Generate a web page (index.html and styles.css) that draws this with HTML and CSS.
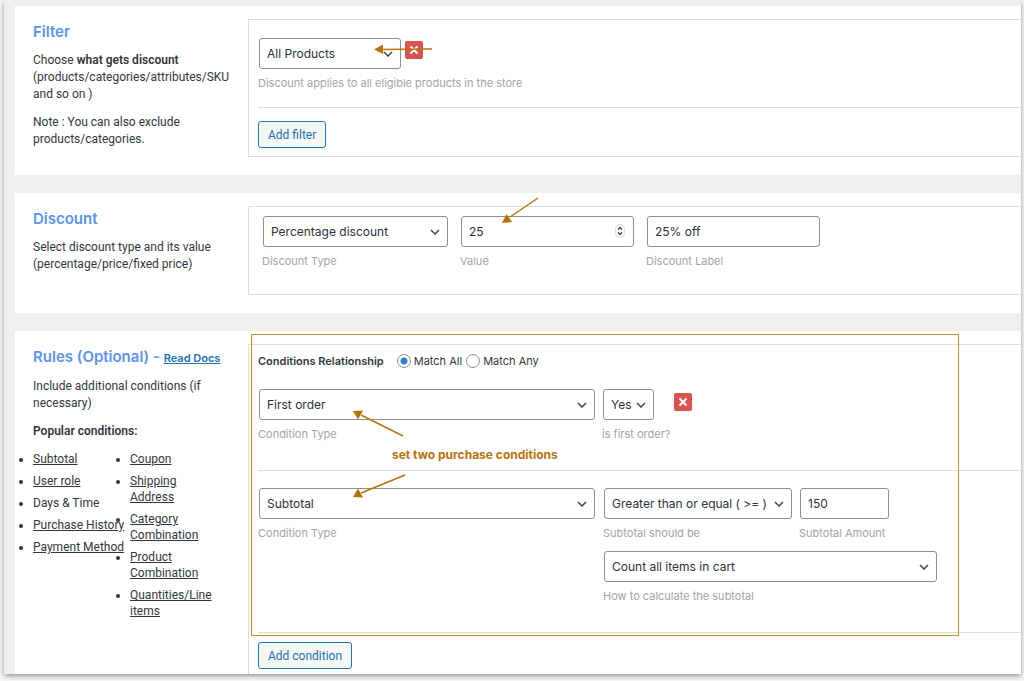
FILE: index.html
```html
<!DOCTYPE html>
<html lang="en">
<head>
    <meta charset="UTF-8">
    <meta name="viewport" content="width=device-width, initial-scale=1.0">
    <title>Discount rule</title>
    <link rel="stylesheet" href="styles.css">
</head>
<body>

<main class="rule-page">

    <!-- Filter -->
    <section class="panel">
        <div class="panel-info">
            <h2>Filter</h2>
            <p>Choose <b>what gets discount</b> (products/categories/attributes/SKU and so on )</p>
            <p>Note : You can also exclude products/categories.</p>
        </div>
        <div class="panel-body">
            <div class="filter-row">
                <div class="field field-filter">
                    <select id="filterType" aria-label="Filter type" aria-describedby="filterHelp">
                        <option>All Products</option>
                    </select>
                    <span class="help" id="filterHelp">Discount applies to all eligible products in the store</span>
                </div>
                <button type="button" class="remove" aria-label="Remove filter">
                    <svg viewBox="0 0 18 18"><path d="M5.5 5.5l7 7M12.5 5.5l-7 7"/></svg>
                </button>
            </div>
            <div class="actions">
                <button type="button" class="add">Add filter</button>
            </div>
            <svg class="arrow arrow-filter" viewBox="0 0 60 12">
                <path class="line" d="M8 6.5L58 6"/>
                <path class="head" d="M0 6.5L9 1.5V11z"/>
            </svg>
        </div>
    </section>

    <!-- Discount -->
    <section class="panel">
        <div class="panel-info">
            <h2>Discount</h2>
            <p>Select discount type and its value (percentage/price/fixed price)</p>
        </div>
        <div class="panel-body discount-row">
            <div class="field field-type">
                <select id="discountType">
                    <option>Percentage discount</option>
                </select>
                <label class="help" for="discountType">Discount Type</label>
            </div>
            <div class="field field-value">
                <div class="number">
                    <input type="number" id="discountValue" value="25">
                    <svg class="spinner" viewBox="0 0 10 14">
                        <rect x=".5" y=".5" width="9" height="13" rx="4"/>
                        <path d="M3 5.5l2-2 2 2M3 8.5l2 2 2-2"/>
                    </svg>
                </div>
                <label class="help" for="discountValue">Value</label>
            </div>
            <div class="field field-value">
                <input type="text" id="discountLabel" value="25% off">
                <label class="help" for="discountLabel">Discount Label</label>
            </div>
            <svg class="arrow arrow-value" viewBox="0 0 38 28">
                <path class="line" d="M36 2L8 21"/>
                <path class="head" d="M0 27L4.5 18L10 26z"/>
            </svg>
        </div>
    </section>

    <!-- Rules -->
    <section class="panel">
        <div class="panel-info">
            <h2>Rules (Optional) - <a href="#">Read Docs</a></h2>
            <p>Include additional conditions (if necessary)</p>
            <p><b>Popular conditions:</b></p>
            <div class="popular">
                <ul>
                    <li><a href="#">Subtotal</a></li>
                    <li><a href="#">User role</a></li>
                    <li>Days &amp; Time</li>
                    <li><a href="#">Purchase History</a></li>
                    <li><a href="#">Payment Method</a></li>
                </ul>
                <ul>
                    <li><a href="#">Coupon</a></li>
                    <li><a href="#">Shipping Address</a></li>
                    <li><a href="#">Category Combination</a></li>
                    <li><a href="#">Product Combination</a></li>
                    <li><a href="#">Quantities/Line items</a></li>
                </ul>
            </div>
        </div>
        <div class="panel-body">
            <div class="relationship" role="radiogroup" aria-labelledby="relationship">
                <b id="relationship">Conditions Relationship</b>
                <label><input type="radio" name="match" checked>Match All</label>
                <label><input type="radio" name="match">Match Any</label>
            </div>

            <div class="condition">
                <div class="field field-condition">
                    <select id="condition1">
                        <option>First order</option>
                    </select>
                    <label class="help" for="condition1">Condition Type</label>
                </div>
                <div class="field field-yes">
                    <select id="isFirst">
                        <option>Yes</option>
                    </select>
                    <label class="help" for="isFirst">is first order?</label>
                </div>
                <button type="button" class="remove" aria-label="Remove condition">
                    <svg viewBox="0 0 18 18"><path d="M5.5 5.5l7 7M12.5 5.5l-7 7"/></svg>
                </button>
            </div>

            <div class="condition">
                <div class="field field-condition">
                    <select id="condition2">
                        <option>Subtotal</option>
                    </select>
                    <label class="help" for="condition2">Condition Type</label>
                </div>
                <div class="condition-options">
                    <div class="field field-operator">
                        <select id="operator">
                            <option>Greater than or equal ( &gt;= )</option>
                        </select>
                        <label class="help" for="operator">Subtotal should be</label>
                    </div>
                    <div class="field field-amount">
                        <input type="text" id="amount" value="150">
                        <label class="help" for="amount">Subtotal Amount</label>
                    </div>
                    <div class="field field-count">
                        <select id="countBy">
                            <option>Count all items in cart</option>
                        </select>
                        <label class="help" for="countBy">How to calculate the subtotal</label>
                    </div>
                </div>
            </div>

            <div class="actions">
                <button type="button" class="add">Add condition</button>
            </div>

            <!-- callout over the two conditions -->
            <div class="callout">
                <svg class="arrow arrow-first" viewBox="0 0 52 28">
                    <path class="line" d="M50 26L8 5"/>
                    <path class="head" d="M0 1L10 .5L5 9.5z"/>
                </svg>
                <span class="callout-text">set two purchase conditions</span>
                <svg class="arrow arrow-second" viewBox="0 0 54 26">
                    <path class="line" d="M52 2L8 20"/>
                    <path class="head" d="M0 24L5 15.5L10 24.5z"/>
                </svg>
            </div>
        </div>
    </section>

</main>

</body>
</html>
```

FILE: styles.css
```css
:root {
    --heading: #5b93ef;
    --link: #2271b1;
    --text: #32373c;
    --muted: #a3a3a3;
    --line: #dcdfe0;
    --field-border: #8c8f94;
    --mark: #b8720a;
}

* {
    box-sizing: border-box;
}

body {
    margin: 0;
    background: #f7f7f7;
    color: var(--text);
    font-family: Inter, "Liberation Sans", sans-serif;
    font-size: 12px;
    line-height: 17px;
}

.rule-page {
    margin: 0 3px 7px 4px;
    padding: 6px 0 0 11px;
    background: #efefef;
    box-shadow: 0 2px 5px rgba(0, 0, 0, 0.4);
    display: flex;
    flex-direction: column;
    gap: 18px;
}

.panel {
    background: white;
    display: flex;
    padding: 13px 0 18px;
}

.panel:last-child {
    padding-bottom: 0;
}

.panel-info {
    width: 233px;
    flex-shrink: 0;
    padding: 2px 16px 0 18px;
}

.panel-info h2 {
    margin: 0 0 9px;
    color: var(--heading);
    font-size: 15px;
    font-weight: 600;
    line-height: 22px;
    white-space: nowrap;
}

.panel-info h2 a {
    color: var(--link);
    font-size: 11px;
}

.panel-info p,
.popular {
    font-family: Roboto, "Liberation Sans", sans-serif;
}

.panel-info p {
    margin: 0 0 11px;
}

.panel-info p:last-child {
    margin-bottom: 0;
}

b {
    font-weight: 600;
}

.popular {
    display: flex;
}

.popular ul {
    width: 97px;
    margin: 0;
    padding: 0;
    line-height: 16px;
}

.popular ul:first-child {
    white-space: nowrap;
}

.popular ul:last-child {
    width: 86px;
}

.popular li {
    margin-bottom: 6px;
}

.popular a {
    color: inherit;
}

.panel-body {
    position: relative;
    flex: 1;
    min-width: 0;
    border: 1px solid var(--line);
    border-right: 0;
    padding-left: 9px;
}

.panel:last-child .panel-body {
    border-bottom: 0;
}

.field {
    display: flex;
    flex-direction: column;
    gap: 6px;
}

.help {
    margin-left: -1px;
    color: var(--muted);
    font-size: 11px;
    line-height: 16px;
    white-space: nowrap;
}

select,
input[type="text"],
input[type="number"] {
    width: 100%;
    height: 31px;
    margin: 0;
    padding: 0 7px;
    border: 1px solid var(--field-border);
    border-radius: 3px;
    background: white;
    color: #2c3338;
    font: inherit;
    appearance: none;
}

select {
    padding-right: 18px;
    background: white url("data:image/svg+xml,%3Csvg xmlns='http://www.w3.org/2000/svg' viewBox='0 0 10 6'%3E%3Cpath d='M1 1l4 4 4-4' fill='none' stroke='%23444' stroke-width='1.5'/%3E%3C/svg%3E") no-repeat right 7px center / 10px 6px;
}

input[type="number"] {
    appearance: textfield;
}

.number {
    position: relative;
}

.spinner {
    position: absolute;
    top: 8px;
    right: 9px;
    width: 10px;
    height: 14px;
    fill: #fafafa;
    stroke: #ddd;
}

.spinner path {
    fill: none;
    stroke: #333;
    stroke-width: 1.2;
}

.remove {
    width: 18px;
    height: 18px;
    padding: 0;
    border: 0;
    border-radius: 2px;
    background: #d9534f;
    cursor: pointer;
}

.remove svg {
    display: block;
    fill: none;
    stroke: white;
    stroke-width: 2;
}

.add {
    height: 27px;
    padding: 0 9px;
    border: 1px solid var(--link);
    border-radius: 3px;
    background: #f6f7f7;
    color: var(--link);
    font: 12px Roboto, "Liberation Sans", sans-serif;
    cursor: pointer;
}

/* filter */
.filter-row {
    display: flex;
    gap: 4px;
    height: 88px;
    padding: 18px 0 0 1px;
    border-bottom: 1px solid var(--line);
}

.filter-row .remove {
    margin-top: 3px;
}

.field-filter {
    width: 142px;
}

.actions {
    display: flex;
    padding: 13px 0 8px;
}

.condition + .actions {
    padding: 9px 0 5px;
}

/* discount */
.discount-row {
    display: flex;
    gap: 13px;
    height: 89px;
    padding: 9px 0 0 14px;
}

.field-type {
    width: 185px;
}

.field-value {
    width: 173px;
}

/* conditions */
.relationship {
    display: flex;
    align-items: center;
    gap: 4px;
    height: 32px;
    font-size: 11px;
}

.relationship b {
    margin-right: 9px;
}

.relationship label {
    display: flex;
    align-items: center;
    gap: 3px;
}

.relationship input {
    width: 14px;
    height: 14px;
    margin: 0;
    border: 1px solid var(--field-border);
    border-radius: 50%;
    background: white;
    appearance: none;
}

.relationship input:checked {
    background: radial-gradient(circle, #3582c4 3px, white 4px);
}

.condition {
    display: flex;
    gap: 8px;
    padding: 17px 0 28px 1px;
    border-bottom: 1px solid var(--line);
}

.relationship + .condition {
    padding-top: 12px;
}

.field-condition {
    width: 336px;
}

.field-yes {
    width: 51px;
}

.condition .remove {
    margin: 4px 0 0 12px;
}

.condition-options {
    display: flex;
    flex-wrap: wrap;
    gap: 10px 8px;
    width: 336px;
    padding-left: 1px;
}

.field-operator {
    width: 188px;
}

.field-amount {
    width: 89px;
}

.field-count {
    width: 333px;
}

/* callouts */
.arrow {
    position: absolute;
    overflow: visible;
}

.arrow .line {
    fill: none;
    stroke: var(--mark);
    stroke-width: 1.5;
}

.arrow .head {
    fill: var(--mark);
}

.arrow-filter {
    top: 23px;
    left: 125px;
    width: 60px;
}

.arrow-value {
    top: -11px;
    left: 253px;
    width: 38px;
}

.callout {
    position: absolute;
    top: -11px;
    left: 2px;
    width: 708px;
    height: 302px;
    border: 1px solid #c8923a;
    pointer-events: none;
}

.callout-text {
    position: absolute;
    top: 111px;
    left: 140px;
    color: var(--mark);
    font-weight: 700;
}

.arrow-first {
    top: 75px;
    left: 101px;
    width: 52px;
}

.arrow-second {
    top: 138px;
    left: 101px;
    width: 54px;
}
```
